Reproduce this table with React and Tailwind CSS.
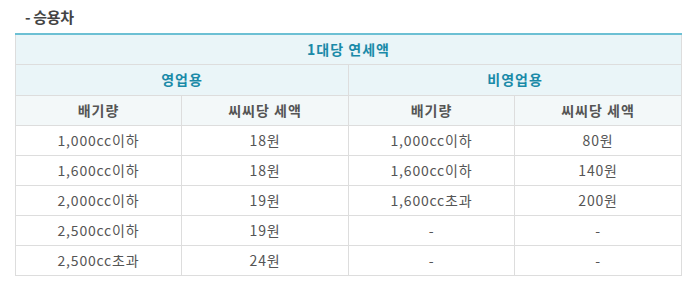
export default function App() {
  const rows = [
    ["1,000cc이하", "18원", "1,000cc이하", "80원"],
    ["1,600cc이하", "18원", "1,600cc이하", "140원"],
    ["2,000cc이하", "19원", "1,600cc초과", "200원"],
    ["2,500cc이하", "19원", "-", "-"],
    ["2,500cc초과", "24원", "-", "-"],
  ];
  const font = { fontFamily: '"Noto Sans CJK KR", "Noto Sans", sans-serif' };
  return (
    <div className="w-[694px] h-[285px] bg-white" style={font}>
      <div className="pt-[6px] pl-[25px] h-[33px] text-[15px] font-bold text-[#444] leading-[22px] tracking-[-0.3px]">
        - 승용차
      </div>
      <div className="pl-[15px] w-[681px]">
        <table className="w-[666px] border-collapse table-fixed border-t-2 border-t-[#6cc0d4]">
          <colgroup>
            <col className="w-[166px]" />
            <col className="w-[167px]" />
            <col className="w-[166px]" />
            <col className="w-[167px]" />
          </colgroup>
          <tbody>
            <tr className="h-[30px] bg-[#eaf5f8]">
              <td colSpan={4} className="border border-[#dddddd] border-t-[#6cc0d4] border-t-2 text-center text-[14px] font-bold text-[#1a8aa8] tracking-[1px] p-0">
                1대당 연세액
              </td>
            </tr>
            <tr className="h-[31px] bg-[#eaf5f8]">
              <td colSpan={2} className="border border-[#dddddd] text-center text-[14px] font-bold text-[#1a8aa8] tracking-[1px] p-0">
                영업용
              </td>
              <td colSpan={2} className="border border-[#dddddd] text-center text-[14px] font-bold text-[#1a8aa8] tracking-[1px] p-0">
                비영업용
              </td>
            </tr>
            <tr className="h-[30px] bg-[#f3f8f9]">
              {["배기량", "씨씨당 세액", "배기량", "씨씨당 세액"].map((t, i) => (
                <td key={i} className="border border-[#dddddd] text-center text-[14px] font-bold text-[#555555] tracking-[1px] p-0">
                  {t}
                </td>
              ))}
            </tr>
            {rows.map((r, i) => (
              <tr key={i} className="h-[30px] bg-white">
                {r.map((c, j) => (
                  <td key={j} className="border border-[#dddddd] text-center text-[14px] text-[#555555] tracking-[0.8px] p-0">
                    {c}
                  </td>
                ))}
              </tr>
            ))}
          </tbody>
        </table>
      </div>
    </div>
  );
}
